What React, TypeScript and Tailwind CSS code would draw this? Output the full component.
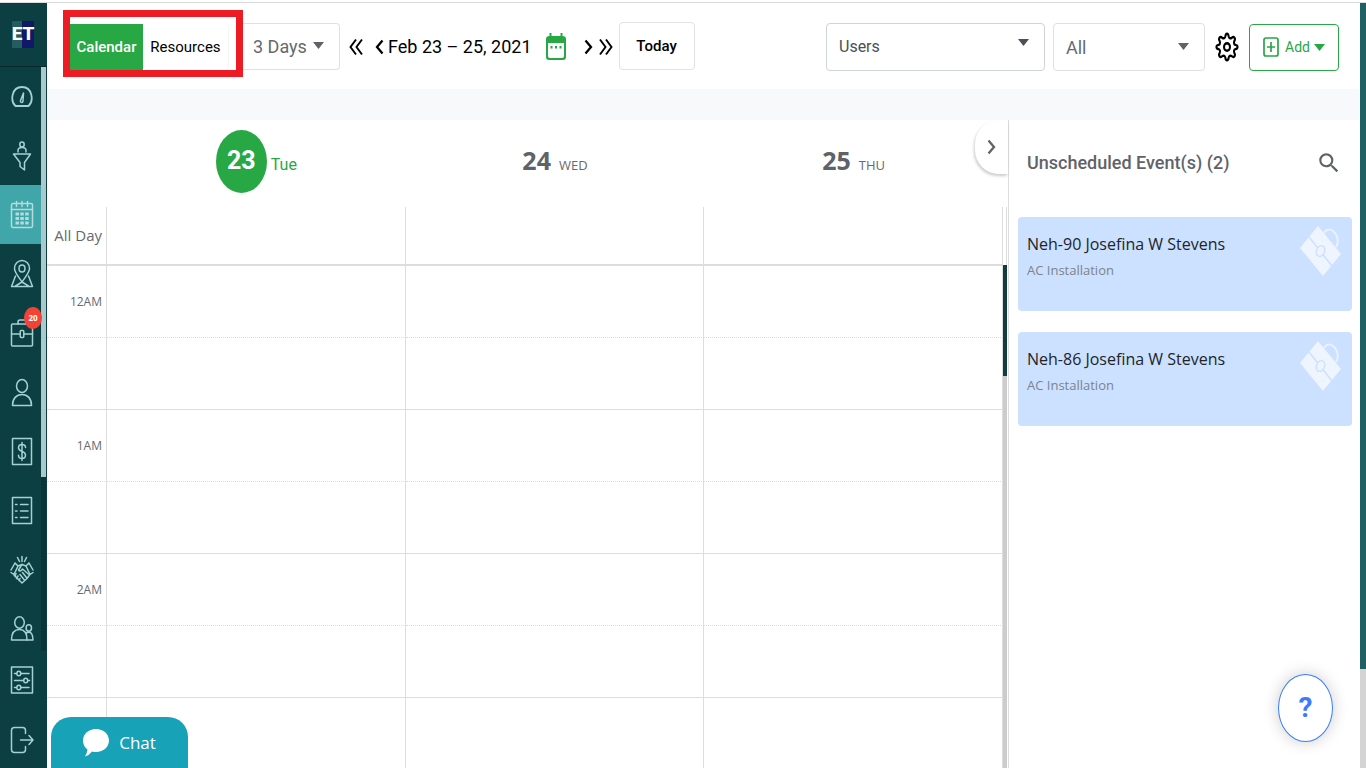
import type { ReactNode } from "react";
import clsx from "clsx";
import { MdSearch } from "react-icons/md";

type NavItem = {
  label: string;
  icon: ReactNode;
  active?: boolean;
  badge?: number;
};

const NavIcon = ({ children }: { children: ReactNode }) => (
  <svg
    viewBox="0 0 24 30"
    className="w-6 h-[30px]"
    fill="none"
    stroke="currentColor"
    strokeWidth="1.5"
    strokeLinecap="round"
    strokeLinejoin="round"
    aria-hidden="true"
  >
    {children}
  </svg>
);

const navItems: NavItem[] = [
  {
    label: "Dashboard",
    icon: (
      <NavIcon>
        <path d="M5.5 24C0 19 1.500 5 12 5s12 14 6.500 19z" strokeWidth="1.8" />
        <path d="M13.500 11l-3 7.500a1.300 1.500 0 1 0 2.500 0z" />
      </NavIcon>
    ),
  },
  {
    label: "Leads",
    icon: (
      <NavIcon>
        <ellipse cx="12" cy="3.5" rx="2.2" ry="2.500" />
        <path d="M8 11V9.500q0-3 4-3t4 3V11M3.500 13h17l-6 8.500V29l-4.500-3.500v-4z" />
      </NavIcon>
    ),
  },
  {
    label: "Calendar",
    active: true,
    icon: (
      <NavIcon>
        <rect x="1.5" y="3.5" width="21" height="24" rx="1.5" />
        <path d="M1.5 9.5h21M6.5 1.5v5M12 1.5v5M17.5 1.5v5" />
        <path
          d="M5.5 14h3.500M10.300 14h3.500M15.200 14h3.500M5.500 18.500H9M10.300 18.500h3.500M15.200 18.500h3.500M5.500 23H9M10.300 23h3.500M15.200 23h3.500"
          strokeWidth="3"
          strokeLinecap="butt"
        />
      </NavIcon>
    ),
  },
  {
    label: "Map",
    icon: (
      <NavIcon>
        <path d="M12 23C7 16 4.500 13 4.500 9.500a7.500 8 0 0 1 15 0C19.500 13 17 16 12 23z" />
        <ellipse cx="12" cy="9.5" rx="3" ry="3.5" />
        <path d="M5.500 17L1.500 27.500h21L18.500 17M5.500 27l6.500-4 6.500 4" />
      </NavIcon>
    ),
  },
  {
    label: "Jobs",
    badge: 20,
    icon: (
      <NavIcon>
        <rect x="1.5" y="6" width="21" height="22" rx="1" />
        <path d="M8 6V4q0-2 2-2h4q2 0 2 2v2M1.5 16h8.500M14 16h8.500" />
        <rect x="10.2" y="12.5" width="3.6" height="7" rx="1" />
      </NavIcon>
    ),
  },
  {
    label: "Customers",
    icon: (
      <NavIcon>
        <ellipse cx="12" cy="9" rx="5.5" ry="6.5" />
        <path d="M2.500 28.500c0-7 4-11 9.500-11s9.500 4 9.500 11z" />
      </NavIcon>
    ),
  },
  {
    label: "Billing",
    icon: (
      <NavIcon>
        <path d="M2.500 2.500h19v26h-19z" />
        <path d="M15.500 11.500c0-2-1.500-3-3.500-3s-3.500 1.200-3.500 3.300c0 4.500 7 2.700 7 7.200 0 2-1.500 3.500-3.500 3.500s-3.500-1.200-3.500-3.300M12 6.500v18" />
      </NavIcon>
    ),
  },
  {
    label: "Lists",
    icon: (
      <NavIcon>
        <path d="M2.500 2.500h19v26h-19z" />
        <path d="M10.500 9.500h7.500M10.500 16h7.500M10.500 22.500h7.500M5.500 9.500h1.500M5.500 16h1.500M5.500 22.500h1.500" />
      </NavIcon>
    ),
  },
  {
    label: "Partners",
    icon: (
      <NavIcon>
        <path d="M12 2.500v5M7.500 3.500l2 4M16.500 3.500l-2 4M5 9l3 3-4 8.500-3-2M19 9l-3 3 4 8.500 3-2M8 12l4-1.500 4 1.500M5 9l-4 7M19 9l4 7" />
        <path d="M12 10.500L8.500 16q1.500 2.500 4-1l7 6-2.500 3.500-5 4.500-8-8M12.500 18.500l4 5M10 20.500l4 5M6 19.500l-1 3M8 22l-1.500 2.500M10 24.500l-1 2" />
      </NavIcon>
    ),
  },
  {
    label: "Team",
    icon: (
      <NavIcon>
        <ellipse cx="9.5" cy="9.5" rx="4.8" ry="5.8" />
        <path d="M1.500 27c0-7 3-10.500 8-10.500s7.500 4 7.500 10.500z" />
        <ellipse cx="18.8" cy="15" rx="2.7" ry="3.2" />
        <path d="M16 20q6.500-3.500 7 7h-6" />
      </NavIcon>
    ),
  },
];

const bottomItems: NavItem[] = [
  {
    label: "Settings",
    icon: (
      <NavIcon>
        <path d="M1.500 2h21v26h-21z" />
        <path d="M4.500 8.500h2M11 8.500h8M4.500 15.500h9M18 15.500h1.500M4.500 22.500h2M11 22.500h8" />
        <ellipse cx="8.8" cy="8.5" rx="2" ry="2.3" />
        <ellipse cx="15.7" cy="15.5" rx="2" ry="2.3" />
        <ellipse cx="8.8" cy="22.5" rx="2" ry="2.3" />
      </NavIcon>
    ),
  },
  {
    label: "Log out",
    icon: (
      <NavIcon>
        <path d="M15.500 9.500V6.500q0-3-3-3h-8q-3 0-3 3v19q0 3 3 3h8q3 0 3-3v-3" />
        <path d="M10.500 16H23M19 11.500l4 4.500-4 4.500" />
      </NavIcon>
    ),
  },
];

const days = [
  { date: 23, name: "Tue", today: true },
  { date: 24, name: "WED" },
  { date: 25, name: "THU" },
];

const hours = ["12AM", "1AM", "2AM", "3AM"];

const events = [
  { title: "Neh-90 Josefina W Stevens", type: "AC Installation" },
  { title: "Neh-86 Josefina W Stevens", type: "AC Installation" },
];

const Caret = ({ className }: { className?: string }) => (
  <svg viewBox="0 0 11 7" className={clsx("w-[11px] h-[7px]", className)} fill="currentColor" aria-hidden="true">
    <path d="M0 0h11L5.500 7z" />
  </svg>
);

const Chevron = ({ double, flip }: { double?: boolean; flip?: boolean }) => (
  <svg
    viewBox={double ? "0 0 14 18" : "0 0 9 18"}
    className={clsx("h-[18px]", double ? "w-[14px]" : "w-[9px]", flip && "rotate-180")}
    fill="none"
    stroke="currentColor"
    strokeWidth={double ? 1.9 : 2.3}
    aria-hidden="true"
  >
    {double ? <path d="M7 1.500L1.500 9 7 16.500M13 1.500L7.500 9l5.500 7.500" /> : <path d="M7.500 2.500L2 9l5.500 6.500" />}
  </svg>
);

const SideLink = ({ item, className }: { item: NavItem; className: string }) => (
  <a
    href="#"
    aria-label={item.label}
    className={clsx(
      "relative flex items-center pl-[10px]",
      className,
      item.active ? "bg-[#41a6a9] text-[#b3dcdc]" : "text-[#a3d2d2]"
    )}
  >
    {item.icon}
    {item.badge && (
      <span className="absolute left-6 top-1 flex w-[18px] h-[22px] items-center justify-center rounded-[50%] bg-[#f44336] text-[8px] font-bold text-white">
        {item.badge}
      </span>
    )}
  </a>
);

const Sidebar = () => (
  <nav className="flex w-[47px] shrink-0 flex-col bg-[#0c3f42]">
    <a href="#" className="flex h-16 shrink-0 items-center border-b border-[#07292c] pl-3">
      <span className="flex h-[27px] w-[22px] items-center justify-center bg-linear-to-r from-[#235d60] from-45% to-[#10186b] to-45% font-['Roboto',sans-serif] text-[19px] font-extrabold text-white">
        ET
      </span>
    </a>
    <div className="flex h-[584px] shrink-0 overflow-hidden">
      <div className="flex-1">
        {navItems.map((item) => (
          <SideLink key={item.label} item={item} className="h-[59px]" />
        ))}
      </div>
      <div className="mr-px w-[5px] bg-[#0a3437]">
        <div className="h-[410px] bg-[#a9c9cc]" />
      </div>
    </div>
    {bottomItems.map((item) => (
      <SideLink key={item.label} item={item} className="flex-1" />
    ))}
  </nav>
);

const Toolbar = () => (
  <header className="flex h-[86px] shrink-0 items-start bg-white pl-4 pr-[21px] pt-5 font-['Roboto',sans-serif]">
    <div className="z-10 -mt-[13px] flex h-[67px] w-[180px] shrink-0 border-[7px] border-[#ed1c24] bg-white pt-[7px]">
      <button className="w-[73px] bg-[#28a745] text-[15px] font-medium text-white">Calendar</button>
      <button className="w-[86px] rounded-r border-r border-gray-100 text-[15px] text-black">Resources</button>
    </div>

    <div className="relative shrink-0">
      <select
        aria-label="View"
        className="h-[47px] w-[97px] appearance-none rounded-r border border-l-0 border-[#dee0e3] bg-white pl-[10px] text-[18px] text-[#666a6e]"
      >
        <option>3 Days</option>
      </select>
      <Caret className="pointer-events-none absolute right-4 top-[19px] text-[#5f6368]" />
    </div>

    <div className="ml-[9px] flex h-[47px] shrink-0 items-center text-black">
      <button aria-label="Back three weeks" className="mr-3">
        <Chevron double />
      </button>
      <button aria-label="Previous" className="mr-1">
        <Chevron />
      </button>
      <span className="text-[18px]">Feb 23 – 25, 2021</span>
      <button aria-label="Pick a date" className="ml-[14px] text-[#28a745]">
        <svg viewBox="0 0 20 28" className="h-7 w-5" aria-hidden="true">
          <path
            fill="currentColor"
            fillRule="evenodd"
            d="M3.500 0h2v3h9V0h2v3Q20 3 20 6v18q0 3-3 3H3q-3 0-3-3V6q0-3 3.500-3zM2 10v13q0 2 2 2h12q2 0 2-2V10z"
          />
          <path fill="currentColor" d="M4.500 13h2v2.500h-2zM9 13h2v2.500H9zM13.500 13h2v2.500h-2z" />
        </svg>
      </button>
      <button aria-label="Next" className="ml-[18px]">
        <Chevron flip />
      </button>
      <button aria-label="Forward three weeks" className="ml-[6px]">
        <Chevron double flip />
      </button>
    </div>
    <button className="ml-[6px] -mt-px h-12 w-[76px] shrink-0 rounded border border-[#e0e2e4] text-[15px] font-medium text-black">
      Today
    </button>

    <div className="ml-auto flex items-center">
      <div className="relative">
        <select
          aria-label="Users"
          className="h-12 w-[219px] appearance-none rounded border border-[#ced4da] bg-white pl-3 text-[16px] text-[#495057]"
        >
          <option>Users</option>
        </select>
        <Caret className="pointer-events-none absolute right-4 top-4 text-[#495057]" />
      </div>
      <div className="relative ml-2">
        <select
          aria-label="Status"
          className="h-12 w-[152px] appearance-none rounded border border-[#dee0e3] bg-white pl-3 text-[18px] text-[#666a6e]"
        >
          <option>All</option>
        </select>
        <Caret className="pointer-events-none absolute right-4 top-5 text-[#5f6368]" />
      </div>
      <button aria-label="Settings" className="ml-[10px] text-black">
        <svg
          viewBox="0 0 24 24"
          preserveAspectRatio="none"
          className="h-[30px] w-6"
          fill="none"
          stroke="currentColor"
          strokeWidth="2"
          strokeLinejoin="round"
          aria-hidden="true"
        >
          <path d="M10.300 3.600C10.700 0.700 13.300 0.700 13.700 3.600C14 4.900 15.300 5.400 16.700 4.700C18.900 3 21 5.100 19.300 7.300C18.600 8.700 19.100 10 20.400 10.300C23.300 10.700 23.300 13.300 20.400 13.700C19.100 14 18.600 15.300 19.300 16.700C21 18.900 18.900 21 16.700 19.300C15.300 18.600 14 19.100 13.700 20.400C13.300 23.300 10.700 23.300 10.300 20.400C10 19.100 8.700 18.600 7.300 19.300C5.100 21 3 18.900 4.700 16.700C5.400 15.300 4.900 14 3.600 13.700C0.700 13.300 0.700 10.700 3.600 10.300C4.900 10 5.400 8.700 4.700 7.300C3 5.100 5.100 3 7.300 4.700C8.700 5.400 10 4.900 10.300 3.600z" />
          <circle cx="12" cy="12" r="3" />
        </svg>
      </button>
      <button className="ml-[10px] flex h-[47px] w-[90px] items-center justify-center rounded border border-[#28a745] text-[14px] text-[#28a745]">
        <svg viewBox="0 0 16 20" className="mr-[6px] h-5 w-4" fill="none" stroke="currentColor" strokeWidth="1.7" aria-hidden="true">
          <rect x="1" y="1" width="14" height="18" rx="2" />
          <path d="M8 5v10M4 10h8" />
        </svg>
        Add
        <Caret className="ml-1" />
      </button>
    </div>
  </header>
);

const CalendarGrid = () => (
  <section className="relative flex min-w-0 flex-1 items-start bg-white">
    <table className="w-full table-fixed border-separate border-spacing-0 text-[#666a6e]">
      <colgroup>
        <col className="w-[60px]" />
        <col />
        <col />
        <col />
      </colgroup>
      <thead>
        <tr className="h-[87px]">
          <td />
          {days.map((day) => (
            <th key={day.date} className="pb-[5px] font-normal">
              {day.today ? (
                <div className="flex items-center justify-center gap-1 font-['Roboto',sans-serif]">
                  <span className="flex h-[63px] w-[51px] items-center justify-center rounded-[50%] bg-[#28a745] text-[25px] font-bold text-white">
                    {day.date}
                  </span>
                  <span className="mt-2 text-[16px] text-[#28a745]">{day.name}</span>
                </div>
              ) : (
                <div className="flex items-baseline justify-center gap-2">
                  <span className="text-[25px] font-bold text-[#5f6368]">{day.date}</span>
                  <span className="text-[13px]">{day.name}</span>
                </div>
              )}
            </th>
          ))}
        </tr>
        <tr className="h-[59px]">
          <th className="border-b-2 border-r border-[#dddddd] pr-1 text-right text-[15px] font-normal">All Day</th>
          {days.map((day) => (
            <td key={day.date} className="border-b-2 border-r border-[#dddddd]" />
          ))}
        </tr>
      </thead>
      {hours.map((hour) => (
        <tbody key={hour}>
          <tr className="h-[72px]">
            <th className="border-b border-r border-[#dddddd] [border-bottom-style:dotted] pr-1 text-right text-[12px] font-normal">
              {hour}
            </th>
            {days.map((day) => (
              <td key={day.date} className="border-b border-r border-[#dddddd] [border-bottom-style:dotted]" />
            ))}
          </tr>
          <tr className="h-[72px]">
            <td className="border-b border-r border-[#dddddd]" />
            {days.map((day) => (
              <td key={day.date} className="border-b border-r border-[#dddddd]" />
            ))}
          </tr>
        </tbody>
      ))}
    </table>
    <div className="flex w-[5px] shrink-0 flex-col self-stretch pt-[87px]">
      <div className="h-[58px] w-[4px] border-r border-[#dddddd]" />
      <div className="h-[111px] w-[4px] shrink-0 bg-[#123c3e]" />
      <div className="w-[4px] flex-1 bg-[#cccccc]" />
    </div>
    <button
      aria-label="Collapse panel"
      className="absolute right-0 top-0 flex h-[54px] w-[33px] items-center justify-center rounded-l-[24px] bg-white text-[#5f6368] shadow-[-1px_2px_3px_rgba(0,0,0,0.2)]"
    >
      <Chevron flip />
    </button>
  </section>
);

const Briefcase = () => (
  <svg viewBox="0 0 42 52" className="h-[52px] w-[42px] shrink-0" fill="none" aria-hidden="true">
    <path d="M18 1l23 28-18 22L0 23z" fill="#eef5ff" />
    <path d="M24 8c3-5 8-4 11 0s4 10 1 14" stroke="#eaf2ff" strokeWidth="2" />
    <path d="M9 12l23 29" stroke="#cce0ff" strokeWidth="1.5" />
    <ellipse cx="20.5" cy="26" rx="4" ry="5.5" transform="rotate(20 20.5 26)" fill="#eef5ff" stroke="#cce0ff" strokeWidth="1.5" />
  </svg>
);

const EventsPanel = () => (
  <aside className="w-[352px] shrink-0 border-l border-[#dddddd] bg-white pl-[9px] pr-2">
    <div className="flex h-[97px] items-center justify-between pb-3 pl-[9px] pr-[10px] font-['Roboto',sans-serif] text-[#5f6368]">
      <h2 className="text-[18px] font-medium">Unscheduled Event(s) (2)</h2>
      <button aria-label="Search events">
        <MdSearch className="h-[30px] w-[26px]" />
      </button>
    </div>
    <div className="flex flex-col gap-[21px]">
      {events.map((event) => (
        <article key={event.title} className="flex h-[94px] justify-between rounded bg-[#cce0ff] pl-[9px] pr-[10px] pt-2">
          <div className="pt-[7px]">
            <h3 className="text-[16px] leading-6 font-medium text-[#212529]">{event.title}</h3>
            <p className="mt-[2px] text-[13px] leading-6 text-[#7b848c]">{event.type}</p>
          </div>
          <Briefcase />
        </article>
      ))}
    </div>
  </aside>
);

const App = () => {
  return (
    <div className="relative flex h-screen flex-col overflow-hidden bg-white font-['Open_Sans',sans-serif]">
      <div className="h-[3px] shrink-0 border-b border-[#dadce0]" />
      <div className="flex min-h-0 flex-1">
        <Sidebar />
        <main className="flex min-w-0 flex-1 flex-col bg-[#f8f9fb]">
          <Toolbar />
          <div className="mt-[31px] flex min-h-0 flex-1 overflow-hidden">
            <CalendarGrid />
            <EventsPanel />
          </div>
        </main>
        <div className="w-[6px] shrink-0 bg-[#d4d4d4]">
          <div className="h-[87%] bg-[#1f6062]" />
        </div>
      </div>

      <button className="absolute bottom-0 left-[51px] flex h-[51px] w-[137px] items-center justify-center gap-[10px] rounded-t-[20px] bg-[#18a2b8] text-[17px] text-white">
        <svg viewBox="0 0 26 28" className="h-7 w-[26px]" fill="currentColor" aria-hidden="true">
          <path d="M13 0c7.500 0 13 5 13 11.500S20.500 23 13 23q-2 0-4-.5-3 4-7 5 2-3 2.500-7Q0 17 0 11.500C0 5 5.500 0 13 0z" />
        </svg>
        Chat
      </button>
      <button
        aria-label="Help"
        className="absolute bottom-[26px] right-[33px] flex h-[68px] w-[55px] items-center justify-center rounded-[50%] border border-[#3b7cff] bg-white font-['Roboto',sans-serif] text-[28px] font-bold text-[#3b7cff] shadow-[0_0_16px_rgba(0,0,0,0.2)]"
      >
        ?
      </button>
    </div>
  );
};

export default App;
